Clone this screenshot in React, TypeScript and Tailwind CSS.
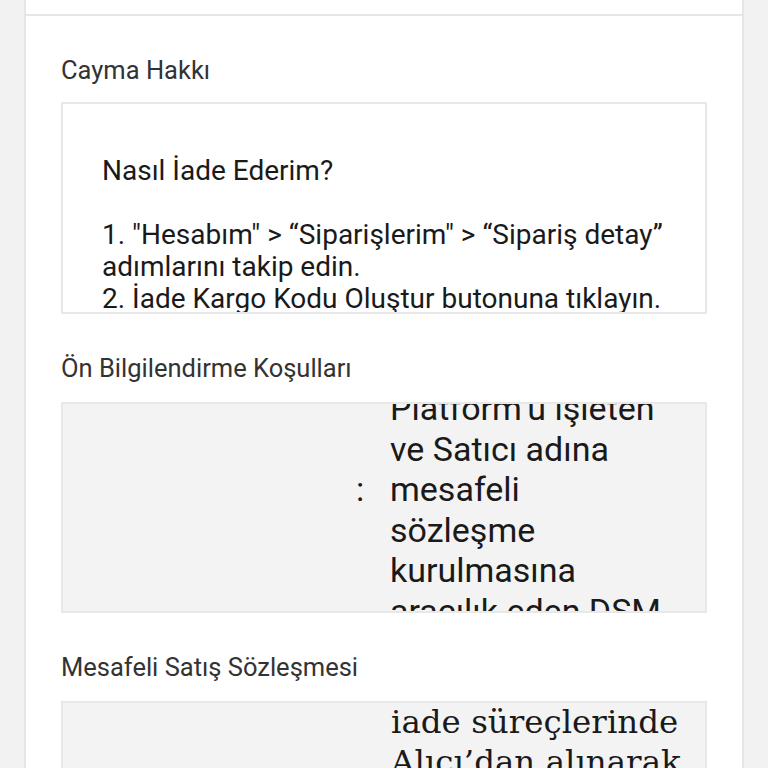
import React from 'react';

const onBilgiLines = [
  'Platform’u işleten',
  've Satıcı adına',
  'mesafeli',
  'sözleşme',
  'kurulmasına',
  'aracılık eden DSM',
  'Grup Danışmanlık',
];

const satisLines = ['iade süreçlerinde', 'Alıcı’dan alınarak', 'Satıcı’ya iletilir.'];

const Heading: React.FC<{ children: React.ReactNode; className?: string }> = ({ children, className }) => (
  <h2 className={`text-[25.5px] leading-[32px] font-normal text-[#333333] ${className ?? ''}`}>{children}</h2>
);

export default function App() {
  return (
    <div className="min-h-screen bg-[#f2f2f2] px-6 font-['Roboto',_'Noto_Sans',_sans-serif]">
      <div className="min-h-[768px] bg-white border-x-2 border-[#e6e6e6]">
        <div className="h-[16px] border-b-2 border-[#e6e6e6]" />

        <div className="px-[35px] pt-[38px]">
          <Heading>Cayma Hakkı</Heading>
          <div className="mt-[16px] h-[212px] overflow-hidden border-2 border-[#e8e8e8] bg-white pl-[39px] pr-6 pt-[51px] text-[28px] leading-[32px] text-[#1a1a1a]">
            <p>Nasıl İade Ederim?</p>
            <p>&nbsp;</p>
            <p>1. "Hesabım" &gt; “Siparişlerim" &gt; “Sipariş detay” adımlarını takip edin.</p>
            <p>2. İade Kargo Kodu Oluştur butonuna tıklayın.</p>
            <p>3. Ürünü kargoya teslim edin.</p>
          </div>

          <Heading className="mt-[38px]">Ön Bilgilendirme Koşulları</Heading>
          <div className="mt-[18px] h-[211px] overflow-hidden border-2 border-[#e8e8e8] bg-[#f3f3f3] text-[34px] leading-[40.5px] text-[#1a1a1a]">
            <div className="-mt-[16px] flex">
              <div className="w-[287px] shrink-0" />
              <div className="w-[20px] shrink-0 pt-[81px] text-center">:</div>
              <div className="ml-[20px]">
                {onBilgiLines.map((l) => (
                  <div key={l}>{l}</div>
                ))}
              </div>
            </div>
          </div>

          <Heading className="mt-[38px]">Mesafeli Satış Sözleşmesi</Heading>
          <div className="mt-[18px] h-[120px] overflow-hidden border-2 border-[#e8e8e8] bg-[#f3f3f3] font-['DejaVu_Serif',_serif] text-[32.5px] leading-[40px] text-[#1a1a1a]">
            <div className="-mt-px pl-[328px]">
              {satisLines.map((l) => (
                <div key={l}>{l}</div>
              ))}
            </div>
          </div>
        </div>
      </div>
    </div>
  );
}
